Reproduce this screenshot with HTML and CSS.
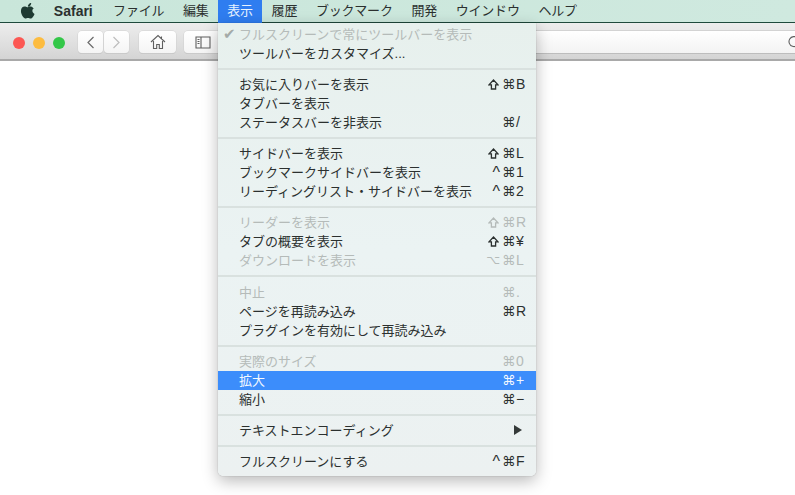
FILE: index.html
```html
<!DOCTYPE html>
<html lang="ja">
<head>
  <meta charset="utf-8">
  <title>Safari 表示メニュー</title>
  <link rel="stylesheet" href="styles.css">
</head>
<body>
  <div id="menubar">
    <svg class="apple" viewBox="0 0 16 18"><path d="M11.9 1c.1 1-.3 2-.9 2.700-.6.8-1.600 1.300-2.600 1.200-.1-1 .4-2 1-2.600C10 1.500 11 1 11.900 1zM15 6.300c-1.200.8-1.800 1.800-1.800 3 0 1.500.9 2.700 2.300 3.300-.4 1.100-.9 2.100-1.600 3-.8 1.100-1.500 1.900-2.600 1.900-1 0-1.500-.6-2.800-.6-1.300 0-1.800.6-2.800.6-1.100 0-1.900-1-2.700-2.100C1.800 13.500 1 11.300 1 9.400c0-3 2-4.600 3.900-4.600 1.100 0 2.100.7 2.800.7.700 0 1.800-.8 3.100-.8 1.100 0 2.400.5 3.200 1.600z"/></svg>
    <div class="bar-item app-name">Safari</div>
    <div class="bar-item">ファイル</div>
    <div class="bar-item">編集</div>
    <div class="bar-item open">表示</div>
    <div class="bar-item">履歴</div>
    <div class="bar-item">ブックマーク</div>
    <div class="bar-item">開発</div>
    <div class="bar-item">ウインドウ</div>
    <div class="bar-item">ヘルプ</div>
  </div>

  <div id="toolbar">
    <div class="lights">
      <span class="light red"></span>
      <span class="light yellow"></span>
      <span class="light green"></span>
    </div>
    <div class="btn-pair">
      <div class="tool-btn nav-btn">
        <svg width="9" height="13" viewBox="0 0 9 13"><path d="M7.500 1 2 6.500 7.500 12" class="chev"/></svg>
      </div>
      <div class="tool-btn nav-btn off">
        <svg width="9" height="13" viewBox="0 0 9 13"><path d="M1.500 1 7 6.500 1.500 12" class="chev"/></svg>
      </div>
    </div>
    <div class="tool-btn home-btn">
      <svg width="16" height="16" viewBox="0 0 16 16"><path d="M1 8 8 1.500 15 8M3.500 7v7.500h3.200v-4h2.600v4h3.200V7M11.500 2.500v2.800" class="glyph"/></svg>
    </div>
    <div class="tool-btn side-btn">
      <svg width="16" height="13" viewBox="0 0 16 13"><path d="M1 1h14v11H1zM6 1v11M2.500 3.500h2M2.500 5.500h2M2.500 7.500h2" class="glyph"/></svg>
    </div>
    <div class="url-field">
      <svg class="reload" width="14" height="14" viewBox="0 0 14 14"><path d="M10.500 3A5 5 0 1 0 12 7M9 .8l2 2.500-2.800 1.400" class="glyph"/></svg>
    </div>
  </div>
  <div id="content"></div>

  <!-- shift arrow is reused by every row that needs it -->
  <svg class="defs" width="0" height="0">
    <symbol id="shift" viewBox="0 0 11 11"><path d="M5.500 1 10 5.800H7.600V10H3.400V5.800H1z"/></symbol>
  </svg>

  <div id="menu">
    <div class="row off"><span class="check">✔</span><span class="label">フルスクリーンで常にツールバーを表示</span></div>
    <div class="row"><span class="label">ツールバーをカスタマイズ...</span></div>
    <div class="sep"></div>
    <div class="row"><span class="label">お気に入りバーを表示</span><svg class="shift"><use href="#shift"/></svg><span class="cmd">⌘</span><span class="key">B</span></div>
    <div class="row"><span class="label">タブバーを表示</span></div>
    <div class="row"><span class="label">ステータスバーを非表示</span><span class="cmd">⌘</span><span class="key">/</span></div>
    <div class="sep"></div>
    <div class="row"><span class="label">サイドバーを表示</span><svg class="shift"><use href="#shift"/></svg><span class="cmd">⌘</span><span class="key">L</span></div>
    <div class="row"><span class="label">ブックマークサイドバーを表示</span><span class="ctrl">^</span><span class="cmd">⌘</span><span class="key">1</span></div>
    <div class="row"><span class="label">リーディングリスト・サイドバーを表示</span><span class="ctrl">^</span><span class="cmd">⌘</span><span class="key">2</span></div>
    <div class="sep"></div>
    <div class="row off"><span class="label">リーダーを表示</span><svg class="shift"><use href="#shift"/></svg><span class="cmd">⌘</span><span class="key">R</span></div>
    <div class="row"><span class="label">タブの概要を表示</span><svg class="shift"><use href="#shift"/></svg><span class="cmd">⌘</span><span class="key">¥</span></div>
    <div class="row off"><span class="label">ダウンロードを表示</span><span class="mod">⌥</span><span class="cmd">⌘</span><span class="key">L</span></div>
    <div class="sep"></div>
    <div class="row off"><span class="label">中止</span><span class="cmd">⌘</span><span class="key">.</span></div>
    <div class="row"><span class="label">ページを再読み込み</span><span class="cmd">⌘</span><span class="key">R</span></div>
    <div class="row"><span class="label">プラグインを有効にして再読み込み</span></div>
    <div class="sep"></div>
    <div class="row off"><span class="label">実際のサイズ</span><span class="cmd">⌘</span><span class="key">0</span></div>
    <div class="row active"><span class="label">拡大</span><span class="cmd">⌘</span><span class="key">+</span></div>
    <div class="row"><span class="label">縮小</span><span class="cmd">⌘</span><span class="key">−</span></div>
    <div class="sep"></div>
    <div class="row"><span class="label">テキストエンコーディング</span><span class="arrow"></span></div>
    <div class="sep"></div>
    <div class="row"><span class="label">フルスクリーンにする</span><span class="ctrl">^</span><span class="cmd">⌘</span><span class="key">F</span></div>
  </div>
</body>
</html>
```

FILE: styles.css
```css
html, body {
  margin: 0;
  height: 100%;
}
body {
  display: flex;
  flex-direction: column;
  overflow: hidden;
  background: #fff;
  color: #2b302f;
  font-family: "Liberation Sans", "Noto Sans CJK JP", sans-serif;
  font-size: 13px;
}
.defs { position: absolute; }

/* menu bar */
#menubar {
  display: flex;
  flex: none;
  align-items: stretch;
  height: 22px;
  padding-left: 20px;
  background: linear-gradient(90deg, #c9e6da, #cfe9df);
  border-bottom: 1px solid #1f4a3c;
  line-height: 22px;
}
.apple {
  width: 15px;
  height: 17px;
  margin: 2px 9.500px 0 0;
  fill: #1e3a32;
}
.bar-item {
  padding: 0 9.350px;
  letter-spacing: -.2px;
  white-space: nowrap;
}
.app-name {
  padding-right: 11px;
  font-weight: bold;
  font-size: 14px;
  letter-spacing: 0;
}
.bar-item.open {
  margin-bottom: -1px;
  background: #2f7df0;
  color: #e8f3ff;
}

/* window toolbar */
#toolbar {
  display: flex;
  flex: none;
  align-items: flex-start;
  box-sizing: border-box;
  height: 38px;
  padding: 8px 0 0 13px;
  background: linear-gradient(#ededed, #dcdcdc 70%, #d4d4d4);
  border-bottom: 2px solid #a9a9a9;
}
.lights {
  display: flex;
  gap: 8px;
  margin: 6px 13px 0 0;
}
.light {
  width: 12px;
  height: 12px;
  border-radius: 50%;
}
.red { background: #fc5753; }
.yellow { background: #fdbc40; }
.green { background: #33c748; }
.btn-pair {
  display: flex;
  gap: 1px;
  margin-right: 10px;
}
.tool-btn {
  display: flex;
  align-items: center;
  justify-content: center;
  box-sizing: border-box;
  height: 22px;
  background: linear-gradient(#fff, #f4f4f4);
  border-radius: 4px;
  box-shadow: 0 0 0 .5px #cfcfcf, 0 1px 0 #c4c4c4;
}
.nav-btn { width: 25px; }
.home-btn {
  width: 37px;
  margin-right: 8px;
}
.side-btn { width: 37px; }
.chev {
  fill: none;
  stroke: #6a6a6a;
  stroke-width: 1.200;
}
.nav-btn.off .chev { stroke: #bdbdbd; }
.glyph {
  fill: none;
  stroke: #5f5f5f;
  stroke-width: 1.100;
}
.url-field {
  display: flex;
  flex: 1;
  align-items: center;
  justify-content: flex-end;
  box-sizing: border-box;
  height: 22px;
  margin-left: 8px;
  background: linear-gradient(#fff, #f3f3f3);
  box-shadow: 0 -1px 0 #d3d3d3, 0 1px 0 #bdbdbd;
}
.reload { margin-right: -6px; }
#content {
  flex: 1;
  background: #fff;
}

/* dropdown */
#menu {
  position: absolute;
  top: 23px;
  left: 218px;
  box-sizing: border-box;
  width: 318px;
  padding: 2px 0 5px;
  background: linear-gradient(#e7f0ed, #ebf3f3 50%, #ecf1f1);
  border-radius: 0 0 5px 5px;
  box-shadow: 0 5px 16px rgba(0, 0, 0, .28), 0 0 1px rgba(0, 0, 0, .45);
}
.row {
  display: flex;
  align-items: center;
  position: relative;
  height: 19px;
  padding: 0 11px 0 21px;
  line-height: 19px;
}
.row.off { color: #b5bbb9; }
.row.active {
  background: #3c8dfb;
  color: #f2f8ff;
}
.check {
  position: absolute;
  left: 5px;
  color: #a4aaa8;
  font-family: "DejaVu Sans", sans-serif;
  font-size: 15px;
}
.label {
  flex: 1;
  white-space: nowrap;
}
.shift {
  width: 11px;
  height: 11px;
  margin-right: 3px;
  fill: none;
  stroke: currentColor;
  stroke-width: 1.300;
}
.ctrl {
  margin-right: 2px;
  font-size: 16px;
}
.mod {
  margin-right: 2px;
  font-family: "DejaVu Sans", sans-serif;
  font-size: 12px;
}
.cmd {
  width: 11px;
  margin-right: 3px;
  font-family: "DejaVu Sans", sans-serif;
  font-size: 13.500px;
}
.key {
  width: 9px;
  font-size: 14px;
}
.arrow {
  width: 0;
  height: 0;
  margin-right: 3px;
  border-top: 5px solid transparent;
  border-bottom: 5px solid transparent;
  border-left: 8px solid #353a39;
}
.sep {
  height: 2px;
  margin: 5.070px 0;
  background: #d9e1df;
}
```
